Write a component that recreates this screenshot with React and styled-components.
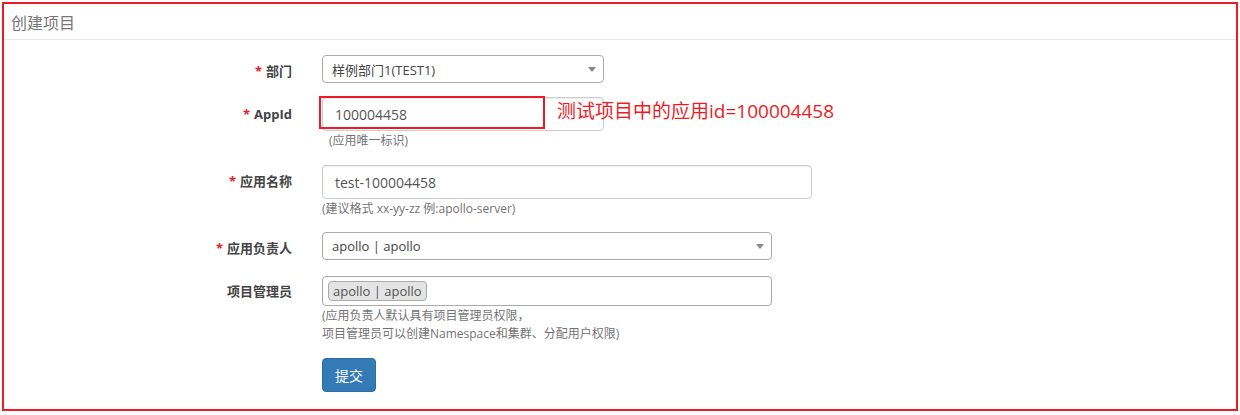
import React from "react";
import styled, { createGlobalStyle } from "styled-components";

const Global = createGlobalStyle`
  html, body { margin: 0; padding: 0; background: #fff; }
  body {
    font-family: "Open Sans", "Noto Sans CJK SC", sans-serif;
    color: #333;
    font-size: 14px;
  }
  * { box-sizing: border-box; }
`;

const Frame = styled.div`
  margin: 2px;
  height: 409px;
  border: 2px solid #ed1c24;
  background: #fff;
`;

const PanelHeader = styled.div`
  height: 36px;
  padding: 0 7px;
  display: flex;
  align-items: center;
  border-bottom: 1px solid #e8e8e8;
  font-size: 16px;
  color: #777;
`;

const Form = styled.form`
  padding-top: 15px;
  display: flex;
  flex-direction: column;
`;

const Row = styled.div`
  position: relative;
  display: grid;
  grid-template-columns: 288px 1fr;
  column-gap: 30px;
  margin-bottom: ${(p) => p.$mb}px;
`;

const Label = styled.label`
  text-align: right;
  font-weight: 700;
  font-size: 13px;
  line-height: 20px;
  color: #444;
  padding-top: ${(p) => p.$pt}px;
`;

const Star = styled.span`
  color: #e8191f;
  margin-right: 4px;
`;

const Field = styled.div`
  display: flex;
  flex-direction: column;
  align-items: flex-start;
`;

const TextInput = styled.div`
  width: ${(p) => p.$w}px;
  height: 34px;
  padding: 0 12px;
  display: flex;
  align-items: center;
  border: 1px solid #ccc;
  border-radius: 4px;
  box-shadow: inset 0 1px 1px rgba(0, 0, 0, 0.075);
  font-size: 14px;
  color: #555;
`;

const Select = styled.div`
  position: relative;
  width: ${(p) => p.$w}px;
  height: 28px;
  padding: 0 9px;
  display: flex;
  align-items: center;
  border: 1px solid #aaa;
  border-radius: 4px;
  font-size: 13px;
  color: #444;
`;

const Arrow = styled.span`
  position: absolute;
  right: 7px;
  top: 11px;
  width: 0;
  height: 0;
  border-left: 4px solid transparent;
  border-right: 4px solid transparent;
  border-top: 5px solid #888;
`;

const MultiSelect = styled.div`
  width: ${(p) => p.$w}px;
  height: 30px;
  padding: 0 5px;
  display: flex;
  align-items: center;
  border: 1px solid #aaa;
  border-radius: 4px;
`;

const Tag = styled.span`
  height: 20px;
  padding: 0 4px;
  display: inline-flex;
  align-items: center;
  background: #e4e4e4;
  border: 1px solid #aaa;
  border-radius: 4px;
  font-size: 13px;
  color: #555;
`;

const Help = styled.div`
  margin-top: 1px;
  padding-left: ${(p) => p.$indent || 0}px;
  font-size: 12px;
  line-height: 18px;
  color: #737373;
`;

const Button = styled.button`
  width: 54px;
  height: 34px;
  padding: 0;
  background: #337ab7;
  border: 1px solid #2e6da4;
  border-radius: 4px;
  color: #fff;
  font-family: "Open Sans", "Noto Sans CJK SC", sans-serif;
  font-size: 14px;
`;

const Highlight = styled.div`
  position: absolute;
  left: 315px;
  top: -1px;
  width: 226px;
  height: 33px;
  border: 2px solid #ed1c24;
  pointer-events: none;
`;

const Note = styled.div`
  position: absolute;
  left: 553px;
  top: 3px;
  font-size: 19px;
  line-height: 22px;
  color: #ed1c24;
  white-space: nowrap;
`;

export default function App() {
  return (
    <>
      <Global />
      <Frame>
        <PanelHeader>创建项目</PanelHeader>
        <Form onSubmit={(e) => e.preventDefault()}>
          <Row $mb={14}>
            <Label $pt={6}>
              <Star>*</Star>部门
            </Label>
            <Field>
              <Select $w={282}>
                样例部门1(TEST1)
                <Arrow />
              </Select>
            </Field>
          </Row>

          <Row $mb={15}>
            <Label $pt={7}>
              <Star>*</Star>AppId
            </Label>
            <Field>
              <TextInput $w={282}>100004458</TextInput>
              <Help $indent={7}>(应用唯一标识)</Help>
            </Field>
            <Highlight />
            <Note>测试项目中的应用id=100004458</Note>
          </Row>

          <Row $mb={14}>
            <Label $pt={6}>
              <Star>*</Star>应用名称
            </Label>
            <Field>
              <TextInput $w={490}>test-100004458</TextInput>
              <Help>(建议格式 xx-yy-zz 例:apollo-server)</Help>
            </Field>
          </Row>

          <Row $mb={16}>
            <Label $pt={6}>
              <Star>*</Star>应用负责人
            </Label>
            <Field>
              <Select $w={450}>
                apollo | apollo
                <Arrow />
              </Select>
            </Field>
          </Row>

          <Row $mb={15}>
            <Label $pt={5}>项目管理员</Label>
            <Field>
              <MultiSelect $w={450}>
                <Tag>apollo | apollo</Tag>
              </MultiSelect>
              <Help>
                (应用负责人默认具有项目管理员权限，
                <br />
                项目管理员可以创建Namespace和集群、分配用户权限)
              </Help>
            </Field>
          </Row>

          <Row $mb={0}>
            <span />
            <Field>
              <Button type="submit">提交</Button>
            </Field>
          </Row>
        </Form>
      </Frame>
    </>
  );
}
